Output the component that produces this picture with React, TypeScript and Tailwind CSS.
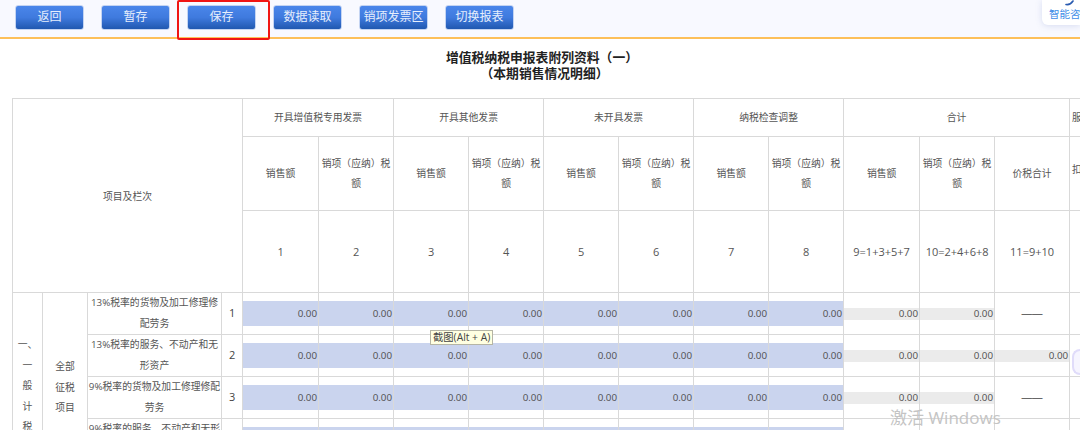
const FONT = "font-['Open_Sans','Noto_Sans_CJK_SC',sans-serif]";
const cell = "border border-[#d9d9d9] text-center align-middle p-0";
const head = `${cell} font-normal pt-[2px]`;
const buttons = ["返回", "暂存", "保存", "数据读取", "销项发票区", "切换报表"];
const groups = ["开具增值税专用发票", "开具其他发票", "未开具发票", "纳税检查调整"];
const formula = ["1", "2", "3", "4", "5", "6", "7", "8", "9=1+3+5+7", "10=2+4+6+8", "11=9+10"];
const rows = [
  { label: "13%税率的货物及加工修理修配劳务", no: "1", total: false },
  { label: "13%税率的服务、不动产和无形资产", no: "2", total: true },
  { label: "9%税率的货物及加工修理修配劳务", no: "3", total: false },
  { label: "9%税率的服务、不动产和无形资产", no: "4", total: true },
  { label: "6%税率", no: "5", total: true },
  { label: "即征即退货物及加工修理修配劳务", no: "6", total: false },
  { label: "即征即退服务、不动产和无形资产", no: "7", total: true },
];
const widths = [30, 45, 134, 21, 76, 75, 75, 75, 75, 75, 75, 75, 76, 75, 75, 75];

function Num({ kind }: { kind: "blue" | "gray" }) {
  if (kind === "blue") {
    return <div className="h-[25px] leading-[25px] bg-[#cad4ee] text-right pr-px text-[#4f4f4f]">0.00</div>;
  }
  return <div className="h-[12px] leading-[12px] bg-[#ebebeb] text-right pr-px text-[#4f4f4f]">0.00</div>;
}

export default function App() {
  return (
    <div className={`relative w-[1080px] h-[430px] overflow-hidden bg-white text-[9.8px] text-[#555] ${FONT}`}>
      <div className="flex gap-[17px] h-[39px] pl-[15px] pt-[5px] bg-[#f8f9ff] border-b-2 border-[#fdc05a]">
        {buttons.map((b) => (
          <button
            key={b}
            className="w-[69px] h-[24.5px] rounded-[3px] border border-[#c4d4f2] bg-gradient-to-b from-[#4a86ea] via-[#3f7ade] to-[#2058b0] text-[12px] text-[#e6eefc]"
          >
            {b}
          </button>
        ))}
      </div>

      <div className="pt-[10px] h-[59px] text-center text-[12.8px] leading-[16px] font-bold text-[#222] pl-[4px] [text-spacing-trim:space-all]">
        <div>增值税纳税申报表附列资料（一）</div>
        <div className="pl-[5px]">（本期销售情况明细）</div>
      </div>

      <table className="ml-[12px] w-[1132px] table-fixed border-collapse">
        <colgroup>
          {widths.map((w, i) => (
            <col key={i} style={{ width: w }} />
          ))}
        </colgroup>
        <thead className="font-normal">
          <tr className="h-[37.5px]">
            <th rowSpan={3} colSpan={4} className={`${cell} font-normal pt-[3px]`}>项目及栏次</th>
            {groups.map((g) => (
              <th key={g} colSpan={2} className={head}>{g}</th>
            ))}
            <th colSpan={3} className={head}>合计</th>
            <th className={`${head} text-left pl-[2px]`}>服</th>
            <th className={head}></th>
          </tr>
          <tr className="h-[74px] leading-[20px]">
            {groups.map((g) => [
              <th key={g + "a"} className={head}>销售额</th>,
              <th key={g + "b"} className={head}>销项（应纳）税额</th>,
            ])}
            <th className={head}>销售额</th>
            <th className={head}>销项（应纳）税额</th>
            <th className={head}>价税合计</th>
            <th className={`${cell} font-normal text-left pl-[2px] pb-[6px]`}>扣</th>
            <th className={head}></th>
          </tr>
          <tr className="h-[82.5px]">
            {formula.map((f) => (
              <th key={f} className={`${head} text-[11px]`}>{f}</th>
            ))}
            <th className={cell}></th>
            <th className={cell}></th>
          </tr>
        </thead>
        <tbody className="leading-[20.5px]">
          {rows.map((r, i) => (
            <tr key={r.no} className="h-[41.5px]">
              {i === 0 && (
                <td rowSpan={7} className={`${cell} !align-top pt-[42px] whitespace-nowrap`}>
                  一、<br />一<br />般<br />计<br />税<br />方<br />法<br />计<br />税
                </td>
              )}
              {i === 0 && (
                <td rowSpan={7} className={`${cell} !align-top pt-[64px] px-[12px]`}>全部征税项目</td>
              )}
              <td className={cell}>{r.label}</td>
              <td className={`${cell} text-[11px] text-[#444]`}>{r.no}</td>
              {Array.from({ length: 8 }).map((_, k) => (
                <td key={k} className={cell}><Num kind="blue" /></td>
              ))}
              <td className={cell}><Num kind="gray" /></td>
              <td className={cell}><Num kind="gray" /></td>
              <td className={cell}>
                {r.total ? <Num kind="gray" /> : <span className="font-['Liberation_Sans'] text-[10.5px] text-[#444]">——</span>}
              </td>
              <td className={cell}></td>
              <td className={cell}></td>
            </tr>
          ))}
        </tbody>
      </table>

      {/* red highlight around 保存 */}
      <div className="absolute left-[177px] top-0 w-[93px] h-[39.5px] border-2 border-[#f01414] rounded-[2px]" />

      {/* assistant card */}
      <div className="absolute left-[1042px] top-0 w-[38px] h-[25px] bg-white rounded-bl-[6px] shadow-[0_1px_6px_rgba(120,140,200,0.25)] overflow-hidden">
        <svg className="absolute left-[22px] top-0" width="14" height="6" viewBox="0 0 14 6" fill="none">
          <path d="M2 4.5C4.5 5 7 4 9 1" stroke="#2a5bb0" strokeWidth="1.6" strokeLinecap="round" />
        </svg>
        <div className="absolute left-[7px] top-[7px] w-[31px] overflow-hidden whitespace-nowrap text-[10.5px] leading-[14px] text-[#3f8ee8]">智能咨</div>
      </div>

      {/* screenshot tooltip */}
      <div className="absolute left-[430px] top-[330px] h-[15px] px-[2px] leading-[13px] border border-[#b5b5a5] bg-[#ffffe1] text-[10.3px] text-[#444] whitespace-nowrap">
        截图(Alt + A)
      </div>

      {/* floating circle */}
      <div className="absolute left-[1072px] top-[349px] w-[8px] h-[26px] rounded-l-full border-2 border-r-0 border-[#e0dcfa] bg-[#f6f5ff]" />

      {/* Windows watermark */}
      <div className="absolute left-[890px] top-[407px] text-[17px] leading-[22px] text-[#c4c4c4] whitespace-nowrap">激活 Windows</div>
    </div>
  );
}
